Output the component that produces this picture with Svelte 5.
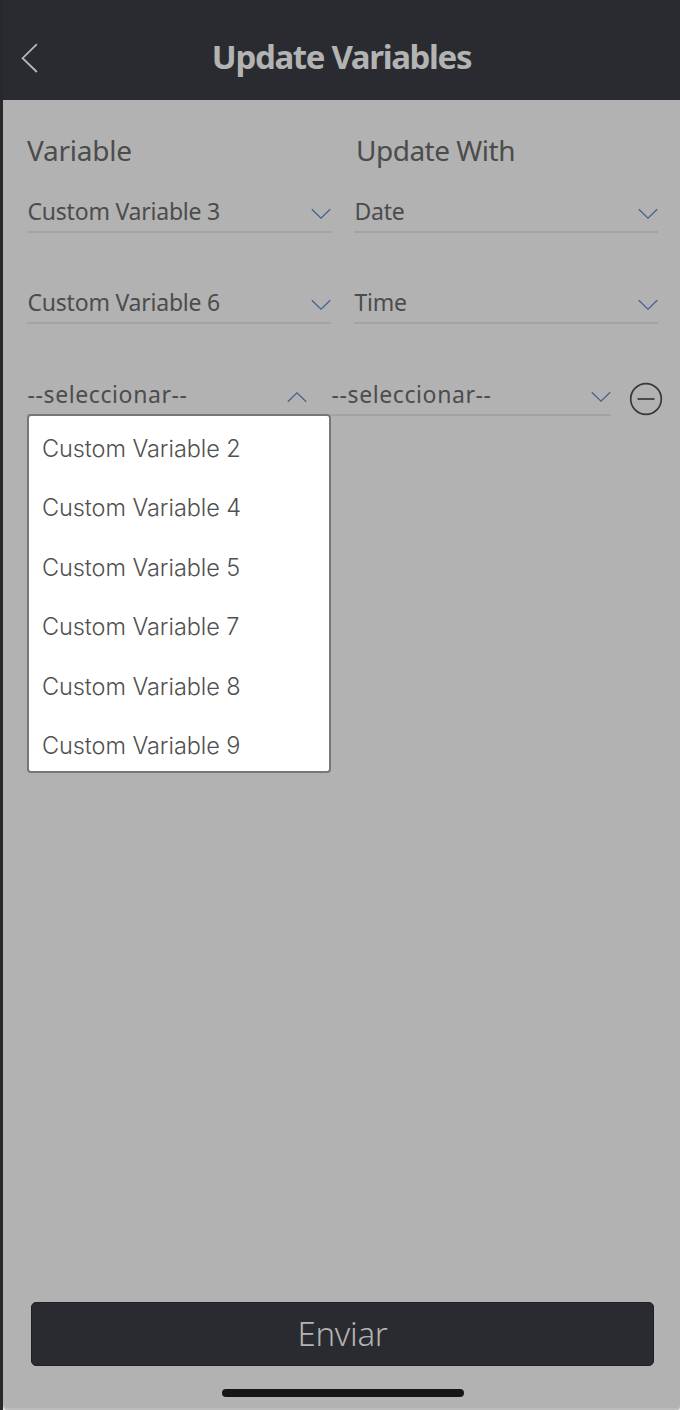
<script>
  const rows = [
    { variable: 'Custom Variable 3', value: 'Date' },
    { variable: 'Custom Variable 6', value: 'Time' },
    { variable: '--seleccionar--', value: '--seleccionar--', open: true },
  ];
  const options = [2, 4, 5, 7, 8, 9].map((n) => `Custom Variable ${n}`);
</script>

{#snippet chevron(up)}
  <svg class="chevron" class:up width="20" height="12" viewBox="0 0 20 12" aria-hidden="true">
    <path d="M.8 1.2 10 10.2 19.2 1.2" />
  </svg>
{/snippet}

<div class="screen">
  <header>
    <button class="back" aria-label="Back">
      <svg width="18" height="30" viewBox="0 0 18 30"><path d="M15.9 1.2 1.6 15.2 15.9 29" /></svg>
    </button>
    <h1>Update Variables</h1>
  </header>

  <main>
    <div class="headings">
      <h2>Variable</h2>
      <h2 class="wide">Update With</h2>
    </div>

    {#each rows as row}
      <div class="row" class:editing={row.open}>
        <div class="select">
          <span class={row.open ? 'placeholder' : 'label'}>{row.variable}</span>
          {@render chevron(row.open)}
          {#if row.open}
            <ul class="menu">
              {#each options as option}
                <li>{option}</li>
              {/each}
            </ul>
          {/if}
        </div>
        <div class="select">
          <span class={row.open ? 'placeholder' : 'label'}>{row.value}</span>
          {@render chevron(false)}
        </div>
        {#if row.open}
          <button class="remove" aria-label="Remove">
            <svg width="34" height="34" viewBox="0 0 34 34">
              <circle cx="17" cy="17" r="15.3" />
              <path d="M8.5 17H25.5" />
            </svg>
          </button>
        {/if}
      </div>
    {/each}
  </main>

  <footer>
    <button class="send">Enviar</button>
    <div class="home"></div>
  </footer>
</div>

<style>
  :global(body) {
    margin: 0;
    background: linear-gradient(90deg, #282828 3px, #e8e8e8 3px);
  }
  .screen {
    box-sizing: border-box;
    width: 677px;
    height: 1410px;
    margin-left: 3px;
    background: #b2b2b2;
    border-radius: 0 0 4px 5px;
    box-shadow: inset 0 -2px #bcbcbc;
    display: flex;
    flex-direction: column;
    font-family: 'Noto Sans', sans-serif;
    color: #4c4c4c;
  }
  button {
    border: 0;
    padding: 0;
    background: none;
    font: inherit;
    display: flex;
  }
  svg {
    display: block;
    fill: none;
  }
  header {
    box-sizing: border-box;
    height: 100px;
    padding: 17px 18px 0 18px;
    background: #2a2b30;
    border-bottom: 1px solid #29263a;
    display: grid;
    grid-template-columns: 20px 1fr 20px;
    align-items: center;
  }
  .back svg {
    stroke: #b8b8b8;
    stroke-width: 1.8;
  }
  h1 {
    margin: 0 0 3px;
    text-align: center;
    font-size: 33px;
    line-height: 40px;
    font-weight: 700;
    letter-spacing: -1.35px;
    color: #b3b3b3;
    white-space: nowrap;
  }
  main {
    flex: 1;
    padding: 30px 22px 0 24px;
  }
  .headings {
    display: grid;
    grid-template-columns: 329px 1fr;
    height: 61px;
  }
  h2 {
    margin: 0;
    font-size: 28px;
    line-height: 40px;
    font-weight: 400;
    letter-spacing: -0.25px;
    white-space: nowrap;
  }
  .wide {
    letter-spacing: -0.5px;
  }
  .row {
    display: flex;
    gap: 23px;
    height: 91px;
  }
  .select {
    position: relative;
    flex: none;
    box-sizing: border-box;
    width: 304px;
    height: 42px;
    border-bottom: 2px solid #a3a3a3;
    display: flex;
    justify-content: space-between;
    font-size: 23px;
    line-height: 40px;
    letter-spacing: -0.22px;
    white-space: nowrap;
  }
  .label {
    padding-left: 0.5px;
  }
  .placeholder {
    padding-left: 0.5px;
    letter-spacing: 0.6px;
  }
  .chevron {
    margin-top: 17px;
    stroke: #43608f;
    stroke-width: 1.2;
  }
  .chevron.up {
    transform: scaleY(-1);
  }
  .editing {
    gap: 24px;
    padding-top: 1px;
  }
  .editing .select {
    width: 280px;
  }
  .remove {
    flex: none;
    margin: 8px 0 0 -6px;
    height: 34px;
  }
  .remove svg {
    stroke: #383838;
    stroke-width: 1.7;
  }
  .menu {
    position: absolute;
    z-index: 1;
    left: 0;
    top: 40px;
    box-sizing: border-box;
    width: 304px;
    height: 359px;
    margin: 0;
    padding: 3px 0 0 13px;
    list-style: none;
    background: #fff;
    border: 2px solid #777;
    border-radius: 4px;
    font-family: Inter, sans-serif;
    font-size: 23.5px;
    line-height: 59.4px;
    font-weight: 300;
    letter-spacing: -0.07px;
    color: #505050;
  }
  footer {
    height: 108px;
    padding: 0 26px 0 28px;
    display: flex;
    flex-direction: column;
    align-items: center;
    gap: 23px;
  }
  .send {
    box-sizing: border-box;
    width: 100%;
    height: 64px;
    padding-bottom: 2px;
    background: #2a2b30;
    border: 1px solid #1d1e2a;
    border-radius: 5px;
    justify-content: center;
    align-items: center;
    color: #b3b3b3;
    font-size: 33px;
    font-weight: 300;
    letter-spacing: -0.3px;
  }
  .home {
    width: 242px;
    height: 8px;
    border-radius: 4px;
    background: #161616;
  }
</style>
